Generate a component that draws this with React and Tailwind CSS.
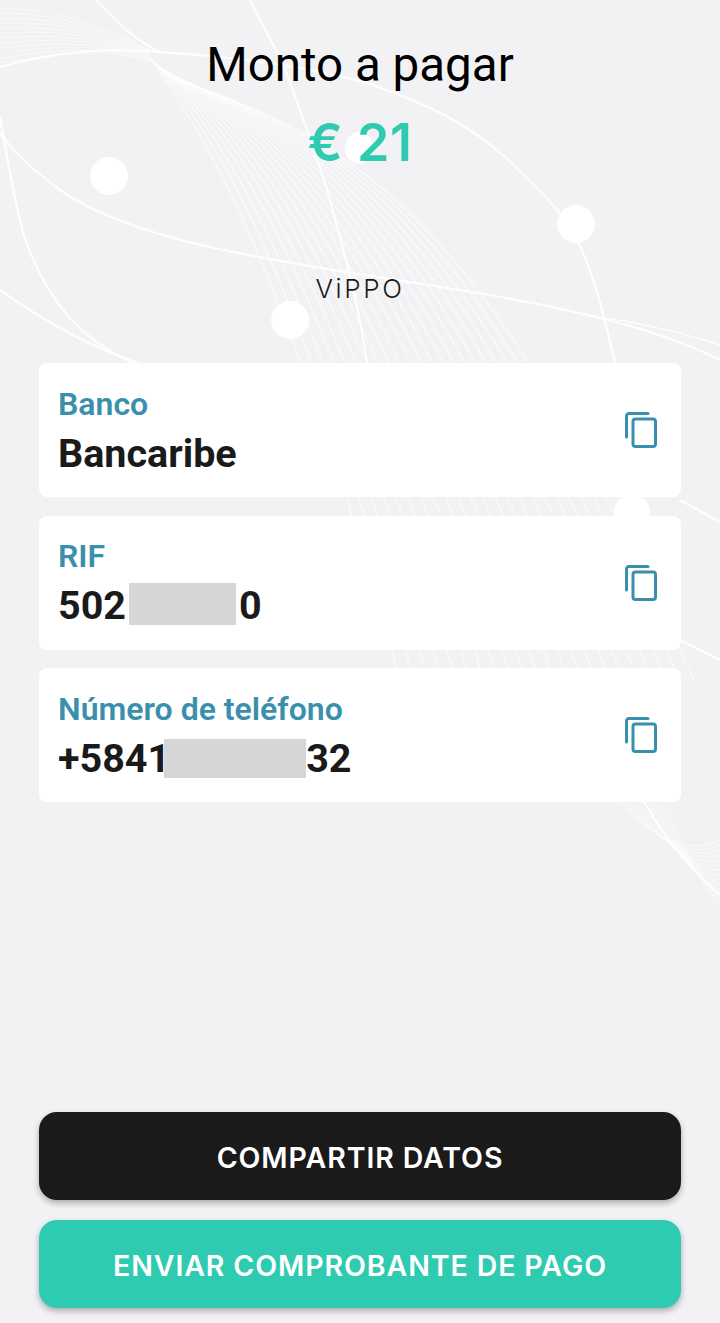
import React from 'react'

const FANS = Array.from({ length: 22 }, (_, i) => i)

function Background() {
  return (
    <svg className="absolute inset-0" width="720" height="1323" viewBox="0 0 720 1323" fill="none">
      {/* top left bundle */}
      {Array.from({ length: 12 }, (_, i) => (
        <path key={i} d={`M0 ${8 + i * 5} C60 ${10 + i * 4} 100 ${25 + i * 2} 150 ${50 + i}`} stroke="#fff" strokeOpacity="0.5" strokeWidth="1" />
      ))}
      {/* fine fan in the middle */}
      {FANS.map((i) => (
        <path
          key={i}
          d={`M${150 + i} ${58 + i} C${190 + i * 9} ${120 + i} ${270 + i * 11} ${210 + i * 2} ${400 + i * 14} 680`}
          stroke="#fff"
          strokeOpacity="0.65"
          strokeWidth="1.2"
        />
      ))}
      {/* lower right bundle */}
      {Array.from({ length: 14 }, (_, i) => (
        <path key={i} d={`M${612 + i * 4} 795 C${640 + i * 3} ${825 + i * 2} ${680 + i * 2} ${860 + i * 2} 720 ${840 + i * 5}`} stroke="#fff" strokeOpacity="0.6" strokeWidth="1" />
      ))}
      <g stroke="#fff" strokeWidth="2.2" strokeOpacity="0.9">
        <path d="M0 67 C60 50 110 48 160 52 C250 58 320 70 367 83 C430 105 470 125 505 157 C540 190 555 205 574 233 C595 275 605 320 615 363" />
        <path d="M96 0 C120 25 135 40 160 52" />
        <path d="M250 0 C270 40 283 60 293 90 C310 140 322 170 330 200 C345 255 360 310 367 363" />
        <path d="M0 133 C20 160 40 175 60 190 C90 210 110 217 138 227 C180 242 230 252 275 260 C340 272 400 280 459 290 C510 298 560 308 596 317 C650 330 690 345 720 360" />
        <path d="M0 117 C8 165 15 200 23 233 C35 270 50 295 69 317 C90 340 110 352 133 363" />
        <path d="M0 290 C25 308 45 320 69 333 C95 347 118 356 138 363" />
        <path d="M596 317 C640 322 690 335 720 345" strokeWidth="1.5" />
        <path d="M640 795 C660 830 680 860 720 895" />
        <path d="M680 500 L720 522" />
        <path d="M680 640 L720 660" />
      </g>
      <g fill="#fff">
        <ellipse cx="109" cy="176" rx="19" ry="19" />
        <ellipse cx="576" cy="224" rx="19" ry="19" />
        <ellipse cx="290" cy="320" rx="19" ry="19" />
        <ellipse cx="359" cy="148" rx="14" ry="16" />
        <ellipse cx="632" cy="512" rx="18" ry="18" />
      </g>
    </svg>
  )
}

function CopyIcon() {
  return (
    <svg width="32" height="36" viewBox="0 0 32 36" fill="none" stroke="#3a90ac" strokeWidth="3" strokeLinecap="round" strokeLinejoin="round">
      <path d="M1.5 25V4a2.5 2.5 0 0 1 2.5-2.5h19" />
      <rect x="8" y="7" width="22.5" height="27.5" rx="2.5" />
    </svg>
  )
}

function DataCard({ label, children }) {
  return (
    <div className="flex h-[134px] items-center justify-between rounded-lg bg-white pl-[19px] pr-[24px]">
      <div className="pt-[2px]">
        <p className="text-[32px] font-semibold leading-[36px] text-[#3a90ac]">{label}</p>
        <div className="mt-[9px] flex h-[46px] items-center text-[39.5px] font-bold leading-[46px] text-[#1a1a1a]">{children}</div>
      </div>
      <CopyIcon />
    </div>
  )
}

function Hidden({ className }) {
  return <span className={`block bg-[#d6d6d6] ${className}`} />
}

export default function App() {
  return (
    <div className="relative flex h-[1323px] w-[720px] flex-col overflow-hidden bg-[#f2f2f5] px-[39px] font-['Roboto',sans-serif]">
      <Background />
      <div className="relative flex flex-1 flex-col">
        <h1 className="mt-[36px] text-center text-[47.5px] font-normal leading-[58px] text-black">Monto a pagar</h1>
        <p className="mt-[18px] text-center font-['Inter',sans-serif] text-[52px] font-semibold leading-[62px] tracking-[0.5px] text-[#2ecbb0]">€ 21</p>
        <p className="mt-[99px] text-center font-['Inter',sans-serif] text-[26px] font-light leading-[32px] tracking-[2.6px] text-[#1a1a1a]">ViPPO</p>
        <div className="mt-[58px] flex flex-col gap-[18.5px]">
          <DataCard label="Banco">Bancaribe</DataCard>
          <DataCard label="RIF">
            <span>502</span>
            <Hidden className="ml-[3px] h-[42px] w-[107px] -translate-y-[2px]" />
            <span className="ml-[3px]">0</span>
          </DataCard>
          <DataCard label="Número de teléfono">
            <span>+5841</span>
            <Hidden className="ml-[-6px] h-[39px] w-[142px]" />
            <span>32</span>
          </DataCard>
        </div>
        <div className="mb-[15px] mt-auto flex flex-col gap-[20px] font-['Inter',sans-serif] text-[28.5px] font-semibold tracking-[0.9px]">
          <button className="h-[88px] rounded-[18px] bg-[#1a1a1a] pt-[4px] text-white shadow-[0_3px_6px_rgba(0,0,0,0.3)]">COMPARTIR DATOS</button>
          <button className="h-[88px] rounded-[18px] bg-[#2ecbb0] pt-[4px] text-white shadow-[0_3px_6px_rgba(0,0,0,0.3)]">ENVIAR COMPROBANTE DE PAGO</button>
        </div>
      </div>
    </div>
  )
}
